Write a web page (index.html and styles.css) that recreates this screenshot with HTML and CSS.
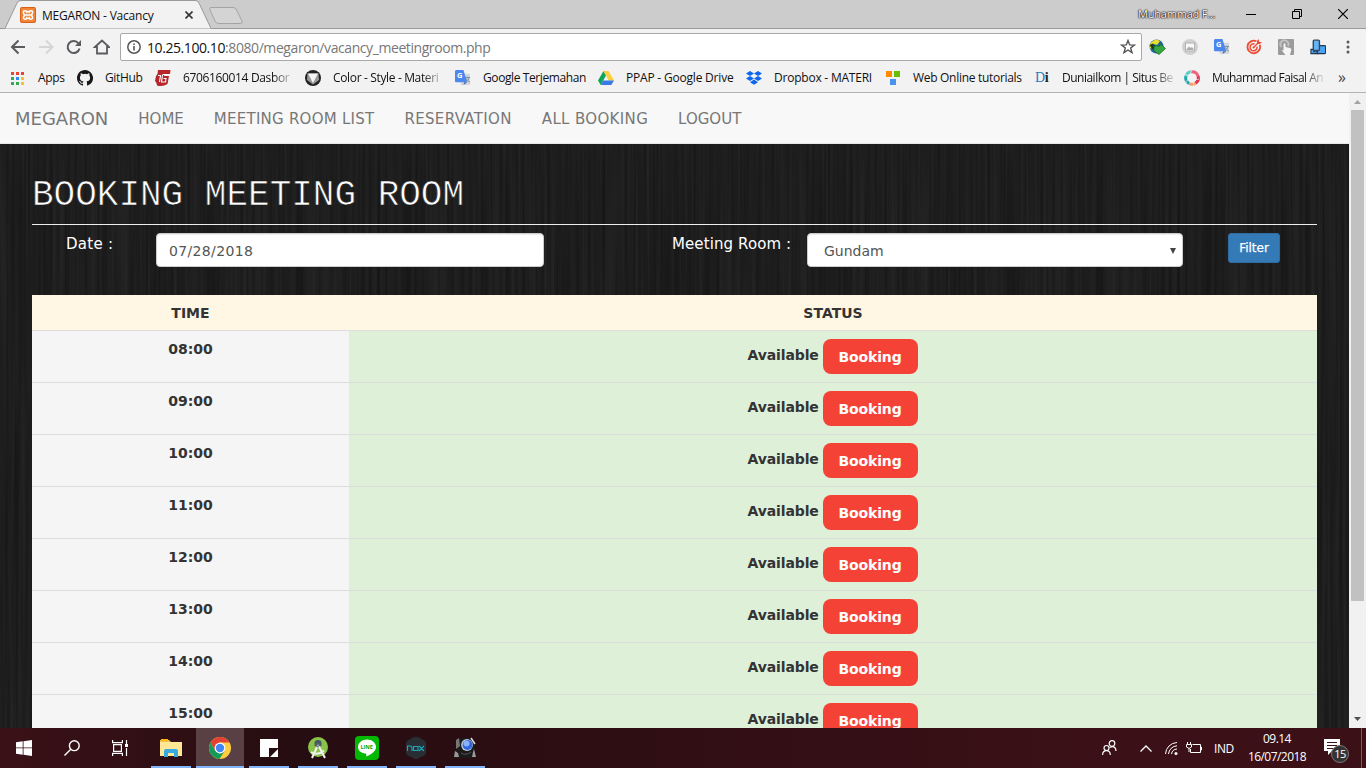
FILE: index.html
```html
<!DOCTYPE html>
<html lang="id">
<head>
<meta charset="utf-8">
<title>MEGARON - Vacancy</title>
<link rel="stylesheet" href="styles.css">
</head>
<body>
<div class="desktop">
  <header class="browser">
    <div class="tabstrip">
      <svg class="tab-shape" width="250" height="29" viewBox="0 0 250 29"><path d="M0 28.5H5L17 3Q18 .5 21 .5H195Q198 .5 199 3L211 28.5H250V29H0Z" fill="#f2f2f2" stroke="#999"/><path d="M211 7.500H233Q235 7.500 236 9L242 21Q243 23.500 240 23.500H219Q216 23.500 215 21L210 10Q209 7.500 211 7.500Z" fill="#d4d4d4" stroke="#a4a4a4"/></svg>
      <div class="tab">
        <svg width="16" height="16" viewBox="0 0 16 16"><rect width="16" height="16" rx="2" fill="#d95f17"/><rect x="1" y="1" width="14" height="14" rx="1" fill="#f08537"/><path d="M6 8H10M6.700 6.200V5.200Q6.700 3.700 5 3.700T3.400 5.400Q3.400 7 5 8Q3.400 9 3.400 10.600T5 12.300T6.700 10.800V9.800M9.300 6.200V5.200Q9.300 3.700 11 3.700T12.600 5.400Q12.600 7 11 8Q12.600 9 12.600 10.600T11 12.300T9.300 10.800V9.800M6.500 4.500H9.500M6.500 11.500H9.500" fill="none" stroke="#fff" stroke-width="1.500"/></svg>
        <span class="tab-title">MEGARON - Vacancy</span>
        <svg class="tab-close" width="8" height="8" viewBox="0 0 8 8"><path d="M.5.5 7.500 7.500M7.500.5.5 7.500" stroke="#333" stroke-width="1.600"/></svg>
      </div>
      <div class="window-tools">
        <span class="profile">Muhammad F...</span>
        <svg width="10" height="10"><path d="M0 5.500H10" stroke="#000"/></svg>
        <svg width="10" height="10"><path d="M.5 2.500H7.500V9.500H.5ZM2.500 2.500V.5H9.500V7.500H7.500" fill="none" stroke="#000"/></svg>
        <svg width="10" height="10"><path d="M0 0 10 10M10 0 0 10" stroke="#000" stroke-width="1.200"/></svg>
      </div>
    </div>
    <div class="toolbar">
      <svg class="nav-buttons" width="110" height="24" viewBox="0 0 110 24" fill="none" stroke-width="2"><path d="M25 12H12M18.500 5.500 12 12 18.500 18.500" stroke="#5a5a5f"/><path d="M39 12H52M46 5.500 52.500 12 46 18.500" stroke="#d5d5d5"/><path d="M78.500 8.500A6 6 0 1 0 79.500 13.500" stroke="#5a5a5f"/><path d="M81 5V11H75Z" fill="#5a5a5f"/><path d="M95 12 102 5.500 109 12H107V18.500H97V12Z" stroke="#5a5a5f" stroke-width="1.800"/></svg>
      <div class="address">
        <svg width="14" height="14" viewBox="0 0 14 14"><circle cx="7" cy="7" r="6.200" fill="none" stroke="#555" stroke-width="1.500"/><path d="M7 6V10.500M7 3.400V5" stroke="#555" stroke-width="1.600"/></svg>
        <span class="url"><b>10.25.100.10</b>:8080/megaron/vacancy_meetingroom.php</span>
        <svg class="star" width="16" height="16" viewBox="0 0 16 16"><path d="M8 1.500 9.700 5.900 14.300 6.100 10.700 9 12 13.600 8 11 4 13.600 5.300 9 1.700 6.100 6.300 5.900Z" fill="none" stroke="#555" stroke-width="1.400"/></svg>
      </div>
      <div class="extensions">
        <svg width="17" height="16" viewBox="1 0 17 16"><circle cx="8.500" cy="7.500" r="7" fill="#2267ae"/><path d="M1.500 6Q4 1 9 .5L12 2 9 6 6 5 2 10Z" fill="#e8df28"/><path d="M1.500 6 5 4.500 7 7 5 11Z" fill="#163c26"/><path d="M6 7H12V4.500L17.500 9.500 11 15.500 6 12Z" fill="#35a742" stroke="#195e21" stroke-width=".7"/></svg>
        <svg width="16" height="16" viewBox="0 0 16 16"><circle cx="8" cy="8" r="8" fill="#d0d0d0"/><rect x="3.500" y="4" width="9" height="8" fill="#f7f7f7" stroke="#b2b2b2"/><path d="M4 11 7 7.500 8.500 9 10 8 12 11Z" fill="#aaa"/></svg>
        <svg width="16" height="16" viewBox="0 0 17 17"><rect x="6" y="4" width="10" height="12" fill="#d4d7dc"/><path d="M1 0H9L13 13H1Q0 13 0 12V1Z" fill="#4c87ed"/><path d="M10 13 9 16 13 13Z" fill="#315dbb"/><text x="2" y="9" fill="#fff" class="mini">G</text><path d="M11 8H16M13.500 7V8M15 8Q14 12 11 13M12 9Q13 12 16 13" fill="none" stroke="#78909c"/></svg>
        <svg width="16" height="16" viewBox="0 0 16 16" fill="none" stroke="#ef4b35"><path d="M10.500 2.300A6.300 6.300 0 1 0 13.700 5.800" stroke-width="1.800"/><path d="M8.500 5A3.500 3.500 0 1 0 11 7.700" stroke-width="1.500"/><circle cx="7.500" cy="8.500" r="1" fill="#ef4b35" stroke="none"/><path d="M7.500 8.500 12 4" stroke-width="1.300"/><path d="M11 4V2L13 0V3H16L14 5H11Z" fill="#ef4b35" stroke="none"/></svg>
        <svg width="16" height="16" viewBox="0 0 16 16"><rect width="16" height="16" rx="1" fill="#9b9b9b"/><path d="M3.500 8A4 4 0 1 1 10 7" fill="none" stroke="#c5c5c5" stroke-width="1.800"/><path d="M5.500 5Q6.500 3.500 7.500 5V8L12 9Q14 9.500 13 12L12 16H7.500L3.500 11 5.500 11.500Z" fill="#f5f5f5"/></svg>
        <svg width="16" height="16" viewBox="0 0 17 16"><rect x="7" y="6.500" width="9.500" height="8.500" rx="1" fill="#4aa4f4" stroke="#25364d" stroke-width="1.200"/><path d="M1 10.500H4V13H8V15H1Z" fill="#4aa4f4" stroke="#25364d" stroke-width="1.200"/><rect x="3.500" y=".7" width="6.500" height="11" rx="1" fill="#64b5f6" stroke="#36475b" stroke-width="1.500"/></svg>
        <svg class="menu-dots" width="4" height="16" viewBox="0 0 4 16" fill="#5a5a5a"><circle cx="2" cy="3" r="1.500"/><circle cx="2" cy="8" r="1.500"/><circle cx="2" cy="13" r="1.500"/></svg>
      </div>
    </div>
    <nav class="bookmarks">
      <div class="bm bm-apps"><svg width="13" height="13" viewBox="0 0 13 13"><path d="M0 0H3V3H0ZM5 0H8V3H5ZM10 0H13V3H10Z" fill="#ea4335"/><path d="M0 5H3V8H0ZM0 10H3V13H0ZM5 10H8V13H5Z" fill="#34a853"/><path d="M5 5H8V8H5Z" fill="#2a8df4"/><path d="M10 5H13V8H10ZM10 10H13V13H10Z" fill="#fbbc2d"/></svg><span>Apps</span></div>
      <div class="bm bm-github"><svg width="16" height="16" viewBox="0 0 16 16"><path fill="#191717" d="M8 0C3.580 0 0 3.580 0 8c0 3.540 2.290 6.530 5.470 7.590.4.070.55-.17.55-.38v-1.490c-2.010.37-2.530-.49-2.690-.94-.09-.23-.48-.94-.82-1.130-.28-.15-.68-.52-.01-.53.63-.01 1.080.58 1.230.82.72 1.210 1.870.87 2.330.66.070-.52.280-.87.510-1.070-1.780-.2-3.640-.89-3.640-3.950 0-.87.310-1.590.820-2.150-.08-.2-.36-1.020.080-2.120 0 0 .67-.21 2.200.820a7.600 7.600 0 0 1 4 0c1.530-1.040 2.200-.82 2.200-.82.440 1.100.160 1.920.080 2.120.510.560.820 1.270.820 2.150 0 3.070-1.870 3.750-3.650 3.950.290.250.540.730.540 1.480v2.200c0 .21.150.46.550.38A8 8 0 0 0 8 0Z"/></svg><span>GitHub</span></div>
      <div class="bm bm-dasbor"><svg width="16" height="16" viewBox="0 0 16 16"><path d="M3 0H15.500L15 4H9.500L9 6H14L12.500 14Q8 17 2 15.500L1.500 13 0 11 1 6 2.500 4Z" fill="#b6252a"/><path d="M3 5.500H5.500L4.500 12M7.500 4.500H15M7.500 5 6.500 12H10.500L11 8.500H8.500" stroke="#fff" stroke-width="1.100" fill="none"/></svg><span class="fade">6706160014 Dasbor</span></div>
      <div class="bm bm-color"><svg width="16" height="16" viewBox="0 0 16 16"><circle cx="8" cy="8" r="8" fill="#222"/><path d="M2.500 3.500H13.500L14 10 8 14.500 2 10Z" fill="#999"/><path d="M3 3.500H13L8 13Z" fill="#f5f5f5"/></svg><span class="fade">Color - Style - Materi</span></div>
      <div class="bm bm-translate"><svg width="16" height="16" viewBox="0 0 17 17"><rect x="6" y="4" width="10" height="12" fill="#d4d7dc"/><path d="M1 0H9L13 13H1Q0 13 0 12V1Z" fill="#4c87ed"/><path d="M10 13 9 16 13 13Z" fill="#315dbb"/><text x="2" y="9" fill="#fff" class="mini">G</text><path d="M11 8H16M13.500 7V8M15 8Q14 12 11 13M12 9Q13 12 16 13" fill="none" stroke="#78909c"/></svg><span>Google Terjemahan</span></div>
      <div class="bm bm-drive"><svg width="16" height="14" viewBox="0 0 16 14"><path d="M5.500 0 0 9.500 2.700 14 8 4.500Z" fill="#0da65b"/><path d="M5.500 0H10.500L16 9.500H10.700Z" fill="#fccd3c"/><path d="M5.200 9.500H16L13.300 14H2.700Z" fill="#397ae8"/></svg><span>PPAP - Google Drive</span></div>
      <div class="bm bm-dropbox"><svg width="16" height="14" viewBox="0 0 16 14" fill="#0d67ed"><path d="M4 0 8 2.500 4 5 0 2.500ZM12 0 16 2.500 12 5 8 2.500ZM4 5 8 7.500 4 10 0 7.500ZM12 5 16 7.500 12 10 8 7.500ZM8 8.500 12 11.200 8 13.800 4 11.200Z"/></svg><span>Dropbox - MATERI</span></div>
      <div class="bm bm-web"><svg width="14" height="14" viewBox="0 0 14 14"><path d="M0 0H6V6H0Z" fill="#ff8a00"/><path d="M8 0H14V6H8Z" fill="#68c100"/><path d="M4 8H10V14H4Z" fill="#4793ef"/></svg><span>Web Online tutorials</span></div>
      <div class="bm bm-dunia"><b class="di">D<i>i</i></b><span class="fade">Duniailkom | Situs Be</span></div>
      <div class="bm bm-faisal"><svg width="16" height="16" viewBox="0 0 16 16" fill="none" stroke-width="3"><path d="M8 1.700A6.300 6.300 0 0 1 14 6" stroke="#f0657c"/><path d="M14 6A6.300 6.300 0 0 1 11.500 13.200" stroke="#df364f"/><path d="M11.500 13.200A6.300 6.300 0 0 1 5 13.500" stroke="#f59c70"/><path d="M5 13.500A6.300 6.300 0 0 1 2 6" stroke="#18a9af"/><path d="M2 6A6.300 6.300 0 0 1 8 1.700" stroke="#5bccc0"/><path d="M8 0Q5 2 7 5M1 5Q4 4 6 7M2 13Q2 9 6 10M10 15Q8 12 10 10M15 9Q11 11 10 6" stroke="#f2f2f2" stroke-width=".7"/></svg><span class="fade">Muhammad Faisal An</span></div>
      <span class="overflow">»</span>
    </nav>
  </header>

  <div class="viewport">
    <main class="page">
      <svg class="wood" width="1349" height="584">
        <filter id="grain" x="0" y="0" width="100%" height="100%" color-interpolation-filters="sRGB"><feTurbulence type="fractalNoise" baseFrequency=".32 .004" numOctaves="3" seed="8"/><feColorMatrix values=".085 0 0 0 .073  .085 0 0 0 .073  .085 0 0 0 .073  0 0 0 0 1"/></filter>
        <rect width="1349" height="584" filter="url(#grain)"/>
      </svg>
      <nav class="navbar"><a class="brand">MEGARON</a><a>HOME</a><a>MEETING ROOM LIST</a><a>RESERVATION</a><a>ALL BOOKING</a><a>LOGOUT</a></nav>
      <section class="content">
        <h1>BOOKING MEETING ROOM</h1>
        <form class="filters">
          <label class="date-label">Date :</label>
          <div class="field date-field">07/28/2018</div>
          <label class="room-label">Meeting Room :</label>
          <div class="field room-field"><span>Gundam</span><svg width="6" height="6" viewBox="0 0 6 6"><path d="M0 0H6L3 6Z" fill="#444"/></svg></div>
          <button type="button" class="filter-btn">Filter</button>
        </form>
        <div class="schedule">
          <div class="head"><span>TIME</span><span>STATUS</span></div>
          <div class="slot"><div class="time">08:00</div><div class="status"><span>Available</span><a class="book">Booking</a></div></div>
          <div class="slot"><div class="time">09:00</div><div class="status"><span>Available</span><a class="book">Booking</a></div></div>
          <div class="slot"><div class="time">10:00</div><div class="status"><span>Available</span><a class="book">Booking</a></div></div>
          <div class="slot"><div class="time">11:00</div><div class="status"><span>Available</span><a class="book">Booking</a></div></div>
          <div class="slot"><div class="time">12:00</div><div class="status"><span>Available</span><a class="book">Booking</a></div></div>
          <div class="slot"><div class="time">13:00</div><div class="status"><span>Available</span><a class="book">Booking</a></div></div>
          <div class="slot"><div class="time">14:00</div><div class="status"><span>Available</span><a class="book">Booking</a></div></div>
          <div class="slot"><div class="time">15:00</div><div class="status"><span>Available</span><a class="book">Booking</a></div></div>
        </div>
      </section>
    </main>
    <div class="scrollbar">
      <svg width="7" height="4" viewBox="0 0 7 4"><path d="M0 4 3.500 0 7 4Z" fill="#a3a3a3"/></svg>
      <div class="thumb"></div>
      <svg class="down" width="7" height="4" viewBox="0 0 7 4"><path d="M0 0 3.500 4 7 0Z" fill="#505050"/></svg>
    </div>
  </div>

  <footer class="taskbar">
    <div class="task"><svg width="16" height="16" viewBox="0 0 16 16" fill="#fff"><path d="M0 2.300 6.700 1.300V7.500H0ZM7.500 1.200 16 0V7.500H7.500ZM0 8.300H6.700V14.700L0 13.700ZM7.500 8.300H16V16L7.500 14.800Z"/></svg></div>
    <div class="task"><svg width="16" height="16" viewBox="0 0 16 16" fill="none" stroke="#fff" stroke-width="1.400"><circle cx="10.300" cy="5.700" r="4.900"/><path d="M6.800 9.200.5 15.500"/></svg></div>
    <div class="task"><svg width="16" height="16" viewBox="0 0 16 16" fill="none" stroke="#fff" stroke-width="1.200"><path d="M.6 0V2.600H10.400V0M.6 16V13.400H10.400V16M1.600 4.600H9.400V11.400H1.600ZM14.500 0V4M14.500 8V16"/><path d="M13 4H16V7H13Z" fill="#fff" stroke="none"/></svg></div>
    <div class="task open"><svg width="22" height="20" viewBox="0 0 22 20"><path d="M0 2H9L11 4H22V18H0Z" fill="#f0c353"/><path d="M1 1H8V3H1Z" fill="#ffb900"/><path d="M0 4H22V18H0Z" fill="#ffe795"/><path d="M4 19V13Q4 11 6 11H16Q18 11 18 13V19H14V15H8V19Z" fill="#35abe2"/></svg></div>
    <div class="task open active"><svg width="22" height="22" viewBox="0 0 22 22"><circle cx="11" cy="11" r="11" fill="#ffcd40"/><path d="M1.500 5.500A11 11 0 0 1 20.500 5.500H11L6.200 13.500Z" fill="#e34133"/><path d="M1.500 5.500A11 11 0 0 0 10.500 22L15.800 13.500 11 16.500 6.200 13.700Z" fill="#169b57"/><circle cx="11" cy="11" r="5.400" fill="#fff"/><circle cx="11" cy="11" r="4.200" fill="#4285f4"/></svg></div>
    <div class="task open"><svg width="18" height="18"><path d="M0 0H18V9H9V18H0Z" fill="#fff"/><path d="M10 18 18 10V18Z" fill="#fff"/></svg></div>
    <div class="task open"><svg width="22" height="24" viewBox="0 0 22 24"><circle cx="11" cy="11" r="10" fill="#8bc34a"/><path d="M7.500 7Q7.500 4 11 4T14.500 7V10H7.500Z" fill="#455a64"/><circle cx="11" cy="9.500" r="2.500" fill="#55656b"/><circle cx="11" cy="9.500" r="1" fill="#aaa"/><path d="M10 11 5 22M12 10.500 18 22M4 16Q11 20 17 14.500" fill="none" stroke="#f2f2f2" stroke-width="2"/></svg></div>
    <div class="task open"><svg width="24" height="24" viewBox="0 0 24 24"><rect width="24" height="24" rx="4" fill="#00b900"/><path d="M12 3.500C7 3.500 3 6.700 3 11S7 17.500 11 17.500L11.500 20.500C17 18 21 15 21 11S17 3.500 12 3.500Z" fill="#fff"/><text x="5.400" y="13.200" class="line-logo">LINE</text></svg></div>
    <div class="task open"><svg width="22" height="24" viewBox="0 0 22 24"><path d="M8 1.500Q11 0 14 1.500L20 5Q21 6 21 8V16Q21 18 20 19L13 22.500Q11 24 9 22.500L2 19Q1 18 1 16V8Q1 6 2 5Z" fill="#292d34"/><path d="M2.500 15V10H5Q7 10 7 12V15M8.500 10.500V14.500H13V10.500ZM14 10 19 15M19 10 14 15" fill="none" stroke="#18a9bd" stroke-width="1.100"/></svg></div>
    <div class="task open"><svg width="24" height="22" viewBox="0 0 24 22"><path d="M4 4 9 1H16L22 5V14L23 21H1L2 14Z" fill="#1b1b1b"/><path d="M3 3 6 1 7 9 3 12Z" fill="#777"/><path d="M2 14 5 16 6 20H1ZM21 12 23 20H19L20 15Z" fill="#999"/><path d="M8 16Q13 19 18 15" fill="none" stroke="#555"/><path d="M18 1 22 7" stroke="#ddd" stroke-width="1.500"/><circle cx="14" cy="8" r="5.900" fill="#c8cedd"/><circle cx="14.500" cy="8" r="5" fill="#2f68df"/><circle cx="13.500" cy="6.500" r="3" fill="#8db0ff"/></svg></div>
    <div class="tray">
      <svg width="15" height="16" viewBox="0 0 15 16" fill="none" stroke="#fff" stroke-width="1.200"><circle cx="10" cy="3.500" r="2.800"/><circle cx="4.500" cy="8" r="2.500"/><path d="M.6 15Q.6 10.700 4.500 10.700T8.300 15M7.500 7.500Q14 5 14 11"/></svg>
      <svg width="12" height="7" viewBox="0 0 12 7"><path d="M.5 6.500 6 1 11.500 6.500" fill="none" stroke="#fff" stroke-width="1.300"/></svg>
      <svg class="wifi" width="13" height="13" viewBox="0 0 13 13" fill="none" stroke="#fff"><path d="M.5 12A12 12 0 0 1 12 .5M3.500 12A9 9 0 0 1 12 3.800M6.500 12A6 6 0 0 1 12 7"/><circle cx="11" cy="11.500" r="1.500" fill="#fff" stroke="none"/></svg>
      <svg width="16" height="12" viewBox="0 0 16 12" fill="none" stroke="#fff"><path d="M6.500 2.500H14.500V10.500H4.500V7M14.500 5H15.500V8H14.500M1.500 0V2M4.500 0V2M.5 2.500H5.500V5L3 6.500.5 5ZM3 6.500V10"/></svg>
      <span class="lang">IND</span>
      <div class="clock"><span>09.14</span><span class="day">16/07/2018</span></div>
      <div class="notice"><svg width="16" height="16" viewBox="0 0 16 16"><path d="M0 0H16V12H8L4 16V12H0Z" fill="#fff"/><path d="M3 3.500H13M3 6.500H13M3 9.500H9" stroke="#3c1519"/></svg><span class="badge">15</span></div>
    </div>
    <div class="peek"></div>
  </footer>
</div>
</body>
</html>
```
FILE: styles.css
```css
* { box-sizing: border-box; }
body { margin: 0; overflow: hidden; font-family: "DejaVu Sans", sans-serif; }
svg { display: block; flex: none; }
.desktop { width: 1366px; height: 768px; display: flex; flex-direction: column; }

.browser { height: 93px; flex: none; background: #f2f2f2; border-bottom: 1px solid #b3b3b3; font: 12px "Open Sans", sans-serif; color: #111; }
.tabstrip { position: relative; height: 29px; background: #ccc; border-bottom: 1px solid #999; display: flex; justify-content: space-between; }
.tab-shape { position: absolute; left: 0; top: 0; }
.tab { position: relative; display: flex; align-items: center; padding: 1px 0 0 20px; height: 29px; }
.tab-title { width: 114px; margin-left: 6px; margin-right: 29px; white-space: nowrap; letter-spacing: -.2px; }
.window-tools { display: flex; align-items: center; height: 27px; padding-right: 18px; gap: 36px; }
.profile { font-size: 11px; letter-spacing: -.2px; color: #fff; width: 78px; margin-right: -6px; white-space: nowrap; text-shadow: 0 0 1px #000, 0 0 1px #000, 0 0 2px #000; }
.toolbar { height: 35px; display: flex; align-items: center; padding-top: 1px; }
.nav-buttons { margin-right: 10px; }
.address { width: 1022px; height: 28px; border: 1px solid #a9a9a9; border-radius: 2px; background: #fff; display: flex; align-items: center; padding: 0 5px 0 6px; }
.url { margin-left: 6px; font-size: 14px; color: #777; letter-spacing: -.42px; white-space: nowrap; }
.url b { color: #111; font-weight: 400; }
.star { margin-left: auto; }
.extensions { margin-left: 7px; display: flex; align-items: center; gap: 16px; }
.menu-dots { margin-left: 4px; }
.mini { font: bold 8px "Open Sans", sans-serif; }
.bookmarks { height: 28px; display: flex; align-items: center; padding-left: 11px; }
.bm { flex: none; display: grid; grid-template-columns: 28px 1fr; align-items: center; white-space: nowrap; letter-spacing: -.35px; line-height: 18px; }
.bm-apps { width: 66px; grid-template-columns: 27px 1fr; }
.bm-github { width: 78px; }
.bm-dasbor, .bm-color { width: 150px; padding-right: 13px; }
.bm-translate { width: 143px; letter-spacing: -.4px; }
.bm-drive { width: 148px; letter-spacing: -.2px; }
.bm-dropbox { width: 140px; letter-spacing: -.22px; }
.bm-web { width: 149px; grid-template-columns: 27px 1fr; letter-spacing: -.3px; }
.bm-dunia { width: 149px; padding-right: 10px; grid-template-columns: 27px 1fr; letter-spacing: -.5px; }
.bm-faisal { width: 153px; padding-right: 14px; letter-spacing: -.55px; }
.fade { -webkit-mask-image: linear-gradient(90deg, #000 82%, rgba(0,0,0,.15)); mask-image: linear-gradient(90deg, #000 82%, rgba(0,0,0,.15)); }
.di { font: 14px "Liberation Serif", serif; color: #2879bd; }
.di i { font-style: normal; font-weight: 700; color: #222; }
.overflow { font-size: 16px; line-height: 16px; padding: 0 0 2px 1px; color: #444; }

.viewport { height: 635px; flex: none; display: flex; }
.page { position: relative; width: 1349px; overflow: hidden; background: #1e1e1e; }
.wood { position: absolute; left: 0; top: 51px; }
.navbar { position: relative; height: 51px; background: #f8f8f8; border-bottom: 1px solid #e7e7e7; display: flex; align-items: center; gap: 30px; padding: 1px 0 0 15px; font-size: 15px; letter-spacing: .25px; color: #777; white-space: nowrap; }
.brand { font-size: 18px; letter-spacing: 0; }
.navbar a:nth-child(2) { letter-spacing: 0; }
.navbar a:nth-child(n+4) { letter-spacing: .35px; }
.navbar a:nth-child(6) { letter-spacing: 0; }
.content { position: relative; padding: 29px 32px 0; }
h1 { margin: 0; height: 52px; padding-top: 3px; border-bottom: 1px solid #eee; font: 400 36px/40px "Liberation Mono", monospace; color: #fff; -webkit-text-stroke: .7px #1e1e1e; }
.filters { display: flex; align-items: flex-start; height: 70px; margin: 0; padding: 8px 0 0 34px; font-size: 15px; }
.filters label { color: #fff; line-height: 22px; white-space: nowrap; letter-spacing: .1px; }
.filters .date-label { width: 90px; letter-spacing: .3px; }
.room-label { width: 135px; margin-left: 128px; }
.field { height: 34px; border: 1px solid #ccc; border-radius: 4px; background: #fff; box-shadow: inset 0 1px 1px rgba(0,0,0,.075); color: #555; display: flex; align-items: center; padding: 2px 12px 0; font-size: 14px; }
.date-field { width: 388px; letter-spacing: .35px; }
.room-field { width: 376px; padding: 2px 6px 0 16px; justify-content: space-between; }
.filter-btn { margin-left: 45px; width: 52px; height: 30px; padding: 0; border: 1px solid #2e6da4; border-radius: 3px; background: #337ab7; color: #fff; font: 12px "DejaVu Sans", sans-serif; -webkit-text-stroke: .25px #fff; }
.schedule { color: #333; font-size: 14px; font-weight: 700; line-height: 20px; }
.head, .slot { display: grid; grid-template-columns: 317px 1fr; text-align: center; }
.head { height: 35px; background: #fff7e3; padding-top: 8px; }
.slot { height: 52px; border-top: 1px solid #ddd; }
.time { background: #f5f5f5; padding-top: 8px; }
.status { background: #dff0d8; padding: 8px 1px 0 0; display: flex; justify-content: center; align-items: flex-start; gap: 4px; }
.status span { width: 71px; padding-top: 6px; letter-spacing: -.12px; }
.book { width: 95px; height: 35px; border-radius: 8px; background: #f44336; color: #fff; line-height: 36px; letter-spacing: -.12px; }
.scrollbar { width: 17px; background: #f1f1f1; display: flex; flex-direction: column; align-items: center; padding: 7px 0; }
.thumb { width: 13px; height: 491px; margin-top: 6px; background: #c1c1c1; }
.down { margin-top: auto; }

.taskbar { height: 40px; flex: none; display: flex; background: linear-gradient(90deg, #3a1117, #260d11 22%, #300e13 50%, #3b1117 80%); color: #fff; font-family: "Open Sans", sans-serif; }
.task { width: 48px; height: 40px; display: flex; align-items: center; justify-content: center; }
.task.open { width: 40px; margin: 0 4.500px; border-bottom: 2px solid #83b5ff; padding-top: 2px; }
.task.open:nth-child(4) { margin-left: 7px; }
.task.active { width: 48px; margin: 0 .5px; background: #584044; }
.line-logo { font: bold 5.500px "Open Sans", sans-serif; fill: #00a900; }
.tray { margin-left: auto; display: flex; align-items: center; padding-right: 13px; font-size: 12px; }
.tray > svg:nth-child(2) { margin: 0 13px 0 23px; }
.wifi { margin-right: 8px; }
.lang { margin-left: 12px; width: 21px; letter-spacing: -.4px; }
.clock { width: 74px; margin-left: 5px; display: flex; flex-direction: column; text-align: center; line-height: 18px; letter-spacing: -.55px; }
.notice { position: relative; margin-left: 10px; width: 24px; padding: 0 0 3px; }
.badge { position: absolute; left: 7px; top: 6px; width: 18px; height: 18px; border-radius: 50%; background: #333; border: 1px solid #777; font-size: 11px; line-height: 15px; text-align: center; letter-spacing: -.5px; }
.peek { width: 5px; border-left: 1px solid #755a5e; }
```
